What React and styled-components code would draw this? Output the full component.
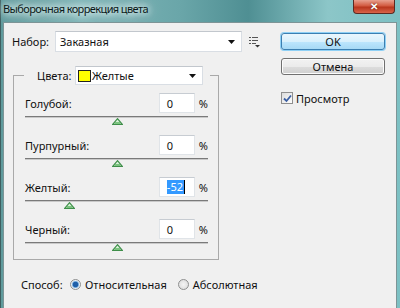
import React from "react";
import styled, { createGlobalStyle } from "styled-components";

const GlobalStyle = createGlobalStyle`
  html, body {
    margin: 0;
    padding: 0;
    background: #6fa9ab;
  }
  body {
    font-family: "Noto Sans", "Open Sans", sans-serif;
  }
`;

const channels = [
  { name: "Голубой:", value: 0 },
  { name: "Пурпурный:", value: 0 },
  { name: "Желтый:", value: -52, selected: true },
  { name: "Черный:", value: 0 },
];

function Arrow() {
  return (
    <svg width="7" height="4" viewBox="0 0 7 4">
      <polygon points="0,0 7,0 3.5,4" fill="#111" />
    </svg>
  );
}

function ListIcon() {
  return (
    <svg width="11" height="11" viewBox="0 0 11 11">
      <g fill="#555">
        <rect x="0" y="0" width="2" height="1" />
        <rect x="3" y="0" width="6" height="1" />
        <rect x="0" y="3" width="2" height="1" />
        <rect x="3" y="3" width="6" height="1" />
        <rect x="0" y="6" width="2" height="1" />
        <rect x="3" y="6" width="4" height="1" />
        <polygon points="6,8 11,8 8.5,10.5" fill="#333" />
      </g>
    </svg>
  );
}

function Thumb() {
  return (
    <svg width="11" height="7" viewBox="0 0 11 7">
      <polygon
        points="5.5,0.7 10.3,6.3 0.7,6.3"
        fill="#d8f0d8"
        stroke="#3f8f4a"
        strokeWidth="1.2"
      />
      <rect x="3" y="4" width="5" height="2" fill="#7bc47f" />
    </svg>
  );
}

function Slider({ value }) {
  const pct = ((value + 100) / 200) * 100;
  return (
    <Track>
      <ThumbWrap style={{ left: `calc(${pct}% - 5px)` }}>
        <Thumb />
      </ThumbWrap>
    </Track>
  );
}

function App() {
  return (
    <>
      <GlobalStyle />
      <Window>
        <TitleBar>
          <Title>Выборочная коррекция цвета</Title>
          <CloseButton>✕</CloseButton>
        </TitleBar>
        <Client>
          <LeftCol>
            <PresetRow>
              <Label>Набор:</Label>
              <Select width="187px" height="21px">
                <span>Заказная</span>
                <Arrow />
              </Select>
              <IconSlot>
                <ListIcon />
              </IconSlot>
            </PresetRow>

            <Group>
              <Legend>
                <Label>Цвета:</Label>
                <Select width="128px" height="19px" tight>
                  <ColorName>
                    <Swatch />
                    Желтые
                  </ColorName>
                  <Arrow />
                </Select>
              </Legend>
              {channels.map((c) => (
                <ChannelRow key={c.name}>
                  <ValueLine>
                    <ChannelName>{c.name}</ChannelName>
                    <NumberBox>
                      {c.selected ? <Selected>{c.value}</Selected> : c.value}
                    </NumberBox>
                    <Percent>%</Percent>
                  </ValueLine>
                  <Slider value={c.value} />
                </ChannelRow>
              ))}
            </Group>

            <MethodRow>
              <Label>Способ:</Label>
              <RadioOption>
                <Radio checked />
                Относительная
              </RadioOption>
              <RadioOption>
                <Radio />
                Абсолютная
              </RadioOption>
            </MethodRow>
          </LeftCol>

          <RightCol>
            <Button primary>OK</Button>
            <Button>Отмена</Button>
            <CheckRow>
              <CheckBox>
                <svg width="9" height="9" viewBox="0 0 9 9">
                  <path
                    d="M1 4.5 L3.5 7 L8 1.5"
                    fill="none"
                    stroke="#3b5fa3"
                    strokeWidth="1.8"
                  />
                </svg>
              </CheckBox>
              Просмотр
            </CheckRow>
          </RightCol>
        </Client>
      </Window>
    </>
  );
}

const Window = styled.div`
  width: 400px;
  height: 308px;
  box-sizing: border-box;
  padding: 0 3px;
  display: flex;
  flex-direction: column;
  overflow: hidden;
  background: linear-gradient(
    90deg,
    #5f9a9c 0%,
    #7fb6b8 20%,
    #6aa6a9 45%,
    #4f8f93 62%,
    #8cc6c8 82%,
    #7cc0c3 100%
  );
  box-shadow: inset 1px 0 0 #3f5f60;
`;

const TitleBar = styled.div`
  height: 22px;
  flex: none;
  display: flex;
  justify-content: space-between;
  align-items: flex-start;
`;

const Title = styled.div`
  font-family: "Noto Sans", sans-serif;
  font-size: 11px;
  letter-spacing: -0.6px;
  line-height: 16px;
  color: #0c1a1a;
  padding-top: 1px;
  text-shadow: 0 0 6px #f2f9f9, 0 0 10px #eaf5f5, 0 0 16px #e2f2f2;
`;

const CloseButton = styled.div`
  width: 42px;
  height: 14px;
  margin-right: 2px;
  box-sizing: border-box;
  border: 1px solid #5b2a22;
  border-top: none;
  border-radius: 0 0 4px 4px;
  background: linear-gradient(180deg, #e8a190 0%, #d25a40 45%, #b8361d 55%, #d9644a 100%);
  color: #fff;
  font-size: 10px;
  font-weight: bold;
  line-height: 13px;
  text-align: center;
  text-shadow: 0 0 2px #5b1a10;
`;

const Client = styled.div`
  flex: 1;
  display: flex;
  background: #f0f0f0;
  border: 1px solid #7d9496;
  border-bottom: none;
  padding: 8px 0 0 8px;
  color: #111;
  font-size: 11px;
`;

const LeftCol = styled.div`
  width: 269px;
  display: flex;
  flex-direction: column;
`;

const RightCol = styled.div`
  width: 104px;
  display: flex;
  flex-direction: column;
  padding-top: 2px;
`;

const PresetRow = styled.div`
  display: flex;
  align-items: center;
  height: 21px;
`;

const Label = styled.span`
  flex: none;
  white-space: nowrap;
  &:first-child {
    width: 43px;
  }
`;

const Select = styled.div`
  width: ${(p) => p.width};
  height: ${(p) => p.height};
  box-sizing: border-box;
  display: flex;
  align-items: center;
  justify-content: space-between;
  padding: ${(p) => (p.tight ? "0 6px 0 2px" : "0 6px 0 4px")};
  background: #fff;
  border: 1px solid #d9dee4;
  border-top-color: #c2c7cd;
  flex: none;
`;

const IconSlot = styled.div`
  margin-left: 7px;
  display: flex;
  padding-top: 1px;
`;

const Group = styled.fieldset`
  margin: 14px 0 0 1px;
  width: 206px;
  box-sizing: border-box;
  padding: 8px 10px 8px 11px;
  border: 1px solid #a9a9a9;
  min-width: 0;
  display: flex;
  flex-direction: column;
  gap: 10px;
`;

const Legend = styled.legend`
  margin-left: -1px;
  padding: 0 7px 0 13px;
  display: flex;
  align-items: center;
  height: 19px;
  ${Label}:first-child {
    width: 38px;
  }
`;

const ColorName = styled.span`
  display: flex;
  align-items: center;
  gap: 1px;
`;

const Swatch = styled.span`
  width: 13px;
  height: 12px;
  box-sizing: border-box;
  background: #ffff00;
  border: 1px solid #222;
`;

const ChannelRow = styled.div`
  display: flex;
  flex-direction: column;
`;

const ValueLine = styled.div`
  display: flex;
  align-items: center;
  height: 20px;
`;

const ChannelName = styled.span`
  flex: 1;
`;

const NumberBox = styled.div`
  width: 36px;
  height: 20px;
  box-sizing: border-box;
  background: #fff;
  border: 1px solid #e0e4e8;
  border-top-color: #c7ccd2;
  padding-left: 7px;
  display: flex;
  align-items: center;
`;

const Selected = styled.span`
  background: #3399ff;
  color: #fff;
  padding: 0 1px 0 0;
  border-right: 1px solid #000;
  line-height: 14px;
`;

const Percent = styled.span`
  margin-left: 4px;
`;

const Track = styled.div`
  position: relative;
  height: 2px;
  margin-top: 3px;
  margin-bottom: 7px;
  border-top: 1px solid #7a7a7a;
  border-bottom: 1px solid #c9c9c9;
  box-sizing: border-box;
`;

const ThumbWrap = styled.div`
  position: absolute;
  top: 1px;
  display: flex;
`;

const MethodRow = styled.div`
  display: flex;
  align-items: center;
  height: 16px;
  margin-top: 16px;
  padding-left: 9px;
  ${Label}:first-child {
    width: 49px;
  }
`;

const RadioOption = styled.span`
  display: flex;
  align-items: center;
  gap: 4px;
  margin-right: 11px;
`;

const Radio = styled.span`
  width: 11px;
  height: 11px;
  box-sizing: border-box;
  border-radius: 50%;
  border: 1px solid #8e8f8f;
  background: ${(p) =>
    p.checked
      ? "radial-gradient(circle, #1f5fa8 0 2.5px, #6fa8dc 3px, #e8eef4 4px)"
      : "radial-gradient(circle, #f4f4f4 0, #d8d8d8 100%)"};
`;

const Button = styled.div`
  height: 17px;
  box-sizing: border-box;
  border-radius: 3px;
  display: flex;
  align-items: center;
  justify-content: center;
  margin-bottom: 8px;
  border: 1px solid ${(p) => (p.primary ? "#3c7fb1" : "#707070")};
  background: ${(p) =>
    p.primary
      ? "linear-gradient(180deg, #eaf6fd 0%, #d9f0fc 50%, #bee6fd 51%, #a7d9f5 100%)"
      : "linear-gradient(180deg, #f2f2f2 0%, #ebebeb 50%, #dddddd 51%, #cfcfcf 100%)"};
  box-shadow: ${(p) => (p.primary ? "0 0 0 1px #8fd0f5" : "inset 0 0 0 1px #fcfcfc")};
`;

const CheckRow = styled.div`
  margin-top: 8px;
  display: flex;
  align-items: center;
  gap: 3px;
  height: 14px;
`;

const CheckBox = styled.span`
  width: 12px;
  height: 12px;
  box-sizing: border-box;
  border: 1px solid #8f8f8f;
  background: linear-gradient(135deg, #dcdcdc, #fefefe);
  display: flex;
  align-items: center;
  justify-content: center;
`;

export default App;
